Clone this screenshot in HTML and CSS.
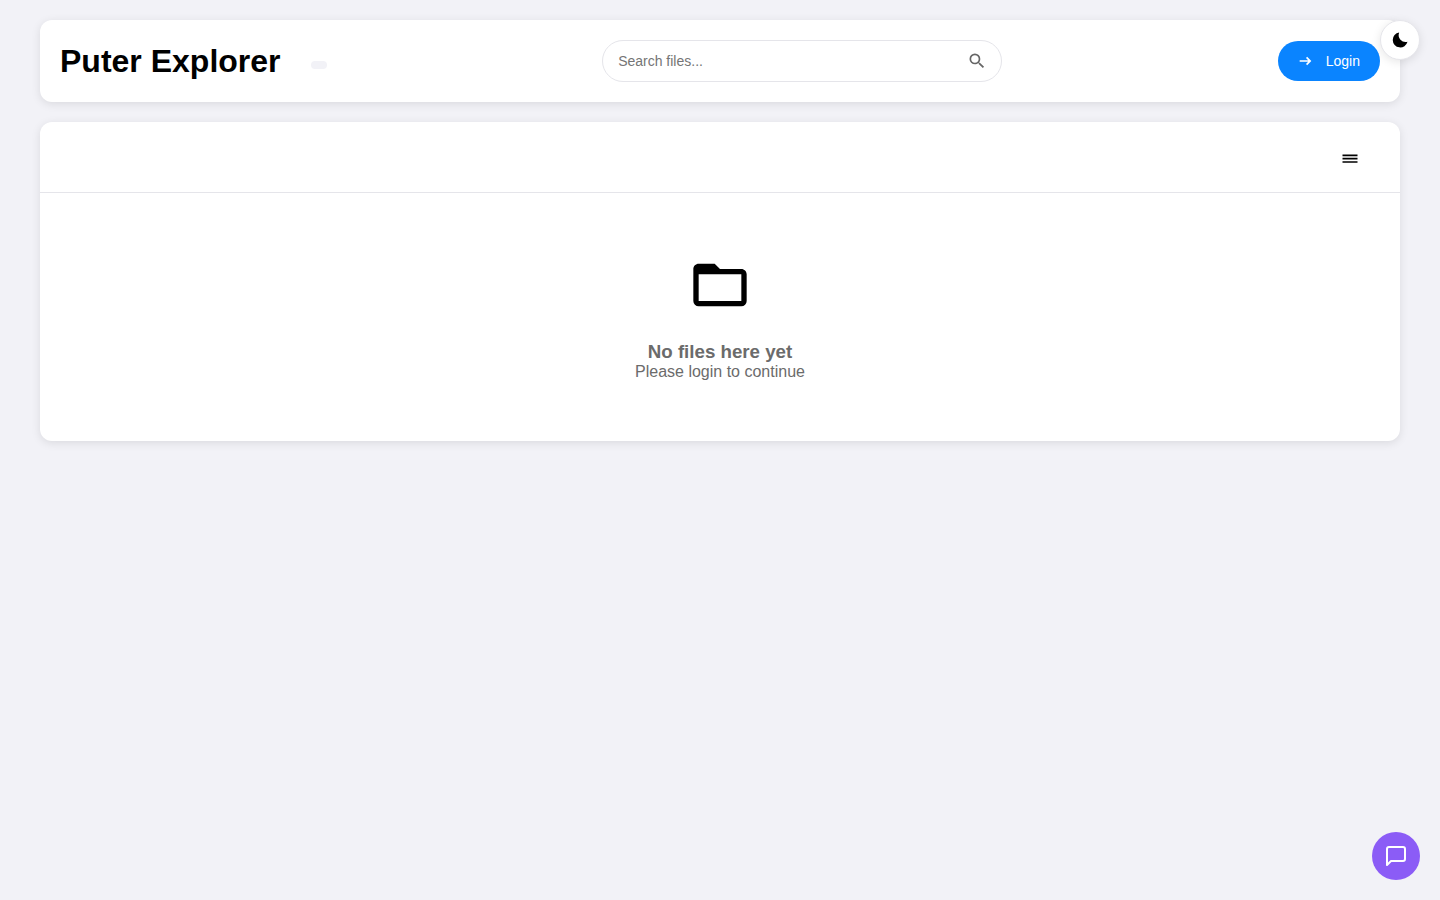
FILE: index.html
```
<!DOCTYPE html>
<html lang="en">
	<head>
		<meta charset="utf-8">
		<meta name="viewport" content="width=device-width, initial-scale=1">
		<title>Puter Explorer</title>
		<link rel="stylesheet" href="styles.css">
	</head>
	<body>
		<button class="theme-toggle" type="button" aria-label="Toggle theme">
			<svg class="icon" viewBox="0 0 24 24"><path d="M11 3a9 9 0 1 0 10 11.2A8.400 8.400 0 0 1 11 3z"/></svg>
		</button>

		<div class="container">
			<header class="header">
				<div class="brand">
					<h1>Puter Explorer</h1>
					<div class="user-badge"></div>
				</div>
				<div class="search">
					<input class="search-input" type="text" placeholder="Search files..." aria-label="Search files">
					<svg class="icon search-icon" viewBox="0 0 24 24"><path d="M15.5 14h-.79l-.28-.27A6.471 6.471 0 0 0 16 9.5 6.5 6.5 0 1 0 9.5 16c1.61 0 3.09-.59 4.23-1.57l.27.28v.79l5 4.99L20.49 19l-4.99-5zm-6 0C7.01 14 5 11.99 5 9.5S7.01 5 9.5 5 14 7.01 14 9.5 11.99 14 9.5 14z"/></svg>
				</div>
				<button class="btn btn-primary" type="button">
					<svg class="icon" viewBox="0 0 24 24"><path d="M11 7L9.6 8.4l2.6 2.6H2v2h10.2l-2.6 2.6L11 17l5-5-5-5z"/></svg>
					Login
				</button>
			</header>

			<main class="files">
				<div class="toolbar">
					<button class="btn btn-plain" type="button" aria-label="List view">
						<svg class="icon" viewBox="0 0 24 24"><path d="M3 9h18v2H3zM3 13h18v2H3zM3 17h18v2H3z"/></svg>
					</button>
				</div>
				<div class="empty">
					<svg class="empty-icon" viewBox="0 0 24 24"><path d="M20 18H4V8h16m0-2h-8l-2-2H4c-1.11 0-2 .89-2 2v12a2 2 0 0 0 2 2h16a2 2 0 0 0 2-2V8c0-1.11-.9-2-2-2z"/></svg>
					<h3>No files here yet</h3>
					<p>Please login to continue</p>
				</div>
			</main>
		</div>

		<button class="chat" type="button" aria-label="Open chat">
			<svg class="chat-icon" viewBox="0 0 24 24"><path d="M21 15a2 2 0 0 1-2 2H7l-4 4V5a2 2 0 0 1 2-2h14a2 2 0 0 1 2 2z"/></svg>
		</button>
	</body>
</html>
```

FILE: styles.css
```
* {
	margin: 0;
	padding: 0;
	box-sizing: border-box;
}

body {
	padding: 20px;
	background: #f2f2f7;
	color: #000;
	font-family: "Liberation Sans", Arial, sans-serif;
}

button {
	border: none;
	cursor: pointer;
	font-family: inherit;
}

.icon {
	display: block;
	width: 20px;
	height: 20px;
	fill: currentColor;
}

.container {
	max-width: 1400px;
	margin: 0 auto;
	padding: 0 20px;
}

/* header */
.header {
	display: flex;
	justify-content: space-between;
	align-items: center;
	margin-bottom: 20px;
	padding: 20px;
	background: #fff;
	border-radius: 12px;
	box-shadow: 0 2px 10px rgba(0, 0, 0, 0.1);
}

.brand {
	display: flex;
	align-items: center;
	gap: 30px;
}

.brand h1 {
	font-size: 32px;
	line-height: 36px;
}

.user-badge {
	margin-top: 8px;
	padding: 4px 8px;
	background: #f2f2f7;
	border-radius: 4px;
}

.search {
	position: relative;
	width: 400px;
}

.search-input {
	display: block;
	width: 100%;
	height: 42px;
	padding: 0 40px 0 15px;
	border: 1px solid #e5e5ea;
	border-radius: 21px;
	background: #fff;
	font-family: inherit;
	font-size: 14px;
}

.search-input::placeholder {
	color: #757575;
}

.search-icon {
	position: absolute;
	top: 11px;
	right: 15px;
	color: #666;
}

.btn {
	display: flex;
	align-items: center;
	gap: 8px;
	padding: 10px 20px;
	border-radius: 20px;
	font-size: 14px;
}

.btn-primary {
	background: #0a84ff;
	color: #fff;
}

.btn-plain {
	background: transparent;
	color: #000;
}

/* file list */
.files {
	background: #fff;
	border-radius: 12px;
	box-shadow: 0 2px 10px rgba(0, 0, 0, 0.1);
}

.toolbar {
	display: flex;
	justify-content: flex-end;
	padding: 15px 20px;
	border-bottom: 1px solid #e5e5ea;
}

.empty {
	display: flex;
	flex-direction: column;
	align-items: center;
	padding: 60px 20px;
	color: #6b6b6b;
}

.empty-icon {
	width: 64px;
	height: 64px;
	margin-bottom: 24px;
	fill: #000;
}

.empty h3 {
	line-height: 22px;
}

.empty p {
	font-size: 16px;
	line-height: 18px;
}

/* floating buttons */
.theme-toggle {
	position: fixed;
	top: 20px;
	right: 20px;
	z-index: 10;
	display: flex;
	align-items: center;
	justify-content: center;
	width: 40px;
	height: 40px;
	border: 1px solid #e5e5ea;
	border-radius: 50%;
	background: #fff;
	color: #000;
	box-shadow: 0 2px 10px rgba(0, 0, 0, 0.1);
}

.chat {
	position: fixed;
	right: 20px;
	bottom: 20px;
	display: flex;
	align-items: center;
	justify-content: center;
	width: 48px;
	height: 48px;
	border-radius: 50%;
	background: #8b5cf6;
}

.chat-icon {
	width: 24px;
	height: 24px;
	fill: none;
	stroke: #fff;
	stroke-width: 2;
	stroke-linecap: round;
	stroke-linejoin: round;
}
```
